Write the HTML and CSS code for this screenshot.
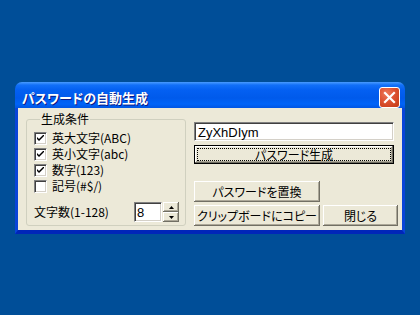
FILE: index.html
```html
<!DOCTYPE html>
<html lang="ja">
<head>
<meta charset="utf-8">
<title>パスワードの自動生成</title>
<link rel="stylesheet" href="styles.css">
</head>
<body>
<div class="window">
  <div class="titlebar">
    <span class="title">パスワードの自動生成</span>
    <span class="close">
      <svg width="13" height="13" viewBox="0 0 13 13"><path d="M2 2 L11 11 M11 2 L2 11" stroke="#fff" stroke-width="2.2" stroke-linecap="square"/></svg>
    </span>
  </div>
  <div class="client">
    <fieldset class="group">
      <legend>生成条件</legend>
      <div class="checks">
        <div class="check"><span class="box"><svg width="7" height="7" viewBox="0 0 7 7"><path d="M0 2 L0 4 L2 6 L7 1 L7 -1 L2 4 Z" fill="#000"/></svg></span><span>英大文字(ABC)</span></div>
        <div class="check"><span class="box"><svg width="7" height="7" viewBox="0 0 7 7"><path d="M0 2 L0 4 L2 6 L7 1 L7 -1 L2 4 Z" fill="#000"/></svg></span><span>英小文字(abc)</span></div>
        <div class="check"><span class="box"><svg width="7" height="7" viewBox="0 0 7 7"><path d="M0 2 L0 4 L2 6 L7 1 L7 -1 L2 4 Z" fill="#000"/></svg></span><span>数字(123)</span></div>
        <div class="check"><span class="box"></span><span>記号(#$/)</span></div>
      </div>
      <div class="count">
        <span class="count-label">文字数(1-128)</span>
        <span class="spin-edit">8</span>
        <span class="spinner">
          <span class="sbtn"><svg width="5" height="3" viewBox="0 0 5 3"><path d="M2.5 0 L5 3 L0 3 Z" fill="#000"/></svg></span>
          <span class="sbtn"><svg width="5" height="3" viewBox="0 0 5 3"><path d="M0 0 L5 0 L2.5 3 Z" fill="#000"/></svg></span>
        </span>
      </div>
    </fieldset>
    <div class="right">
      <div class="edit">ZyXhDIym</div>
      <div class="btn default"><span class="focus">パスワード生成</span></div>
      <div class="btn replace">パスワードを置換</div>
      <div class="btn-row">
        <div class="btn copy">クリップボードにコピー</div>
        <div class="btn closebtn">閉じる</div>
      </div>
    </div>
  </div>
</div>
</body>
</html>
```
FILE: styles.css
```css
html, body {
  margin: 0;
  padding: 0;
}
body {
  background: #004E98;
  width: 420px;
  height: 315px;
  overflow: hidden;
  padding: 82px 0 0 15px;
  box-sizing: border-box;
  font-family: "Noto Sans CJK JP", "Liberation Sans", sans-serif;
  font-size: 12px;
  font-feature-settings: "palt" 1;
  color: #000;
}
.window {
  width: 390px;
  display: flex;
  flex-direction: column;
}
.titlebar {
  height: 26px;
  border-radius: 7px 7px 0 0;
  background: linear-gradient(to bottom, #4A9CFF 0px, #1270F8 3px, #0460F2 8px, #005AEB 16px, #0064F8 22px, #0055E3 26px);
  display: flex;
  align-items: flex-start;
  justify-content: space-between;
  padding: 5px 5px 0 7px;
  box-sizing: border-box;
}
.title {
  color: #fff;
  font-weight: bold;
  font-size: 13px;
  line-height: 16px;
  margin-top: 3px;
  text-shadow: 1px 1px 0 #0A1883;
}
.close {
  width: 21px;
  height: 21px;
  box-sizing: border-box;
  border: 1px solid #fff;
  border-radius: 3px;
  background: radial-gradient(circle at 35% 30%, #EE7B5C 0%, #DD5232 45%, #C33A14 100%);
  display: flex;
  align-items: center;
  justify-content: center;
}
.client {
  background: #ECE9D8;
  border-left: 3px solid #0844D8;
  border-right: 3px solid #0844D8;
  border-bottom: 4px solid #0025B8;
  height: 126px;
  box-sizing: border-box;
  padding: 5px 8px 4px 8px;
  display: flex;
  gap: 8px;
}
.group {
  flex: 0 0 160px;
  margin: 0;
  padding: 0 0 3px 7px;
  width: 160px;
  box-sizing: border-box;
  border: 1px solid #D0D0BF;
  border-radius: 3px;
  min-width: 0;
}
.group legend {
  padding: 0 1px;
  margin-left: 6px;
  line-height: 12px;
  height: 12px;
}
.checks {
  padding-top: 6px;
  display: flex;
  flex-direction: column;
}
.check {
  height: 16px;
  display: flex;
  align-items: flex-start;
  gap: 5px;
  line-height: 14px;
}
.box {
  width: 13px;
  height: 13px;
  margin-top: 1px;
  box-sizing: border-box;
  background: #fff;
  border-top: 1px solid #808080;
  border-left: 1px solid #808080;
  border-bottom: 1px solid #fff;
  border-right: 1px solid #fff;
  box-shadow: inset 1px 1px 0 #404040, inset -1px -1px 0 #D4D0C8;
  display: flex;
  align-items: center;
  justify-content: center;
}
.count {
  margin-top: 7px;
  height: 20px;
  display: flex;
  align-items: center;
}
.count-label {
  width: 100px;
  line-height: 14px;
}
.spin-edit {
  width: 28px;
  height: 20px;
  box-sizing: border-box;
  background: #fff;
  border-top: 1px solid #808080;
  border-left: 1px solid #808080;
  border-bottom: 1px solid #fff;
  border-right: 1px solid #fff;
  box-shadow: inset 1px 1px 0 #404040, inset -1px -1px 0 #D4D0C8;
  padding: 2px 0 0 2px;
  line-height: 15px;
  font-family: "Liberation Sans", sans-serif;
  font-size: 13px;
}
.spinner {
  margin-left: 1px;
  width: 16px;
  height: 20px;
  display: flex;
  flex-direction: column;
}
.sbtn {
  height: 10px;
  box-sizing: border-box;
  background: #ECE9D8;
  box-shadow: inset -1px -1px 0 #716F64, inset 1px 1px 0 #fff, inset -2px -2px 0 #ACA899;
  display: flex;
  align-items: center;
  justify-content: center;
}
.right {
  flex: 0 0 200px;
  width: 200px;
  display: flex;
  flex-direction: column;
}
.edit {
  margin-top: 9px;
  width: 200px;
  height: 20px;
  box-sizing: border-box;
  background: #fff;
  border-top: 1px solid #808080;
  border-left: 1px solid #808080;
  border-bottom: 1px solid #fff;
  border-right: 1px solid #fff;
  box-shadow: inset 1px 1px 0 #404040, inset -1px -1px 0 #D4D0C8;
  padding: 2px 0 0 3px;
  line-height: 15px;
  font-family: "Liberation Sans", sans-serif;
  font-size: 13px;
}
.btn {
  box-sizing: border-box;
  background: #ECE9D8;
  box-shadow: inset -1px -1px 0 #716F64, inset 1px 1px 0 #fff, inset -2px -2px 0 #ACA899;
  display: flex;
  align-items: center;
  justify-content: center;
  line-height: 14px;
  white-space: nowrap;
  flex-shrink: 0;
}
.btn.default {
  margin-top: 4px;
  width: 200px;
  height: 19px;
  border: 1px solid #000;
  padding: 2px;
}
.focus {
  flex: 1;
  align-self: stretch;
  border: 1px dotted #000;
  display: flex;
  align-items: center;
  justify-content: center;
}
.btn.replace {
  margin-top: 17px;
  width: 126px;
  height: 21px;
}
.btn-row {
  margin-top: 3px;
  display: flex;
  gap: 3px;
}
.btn.copy {
  width: 126px;
  height: 21px;
}
.btn.closebtn {
  width: 75px;
  height: 21px;
}
```
